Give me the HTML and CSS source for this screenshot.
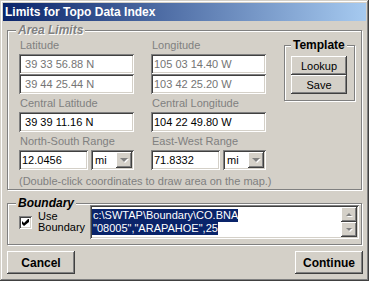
FILE: index.html
```html
<!DOCTYPE html>
<html lang="en">
<head>
    <meta charset="UTF-8">
    <title>Limits for Topo Data Index</title>
    <link rel="stylesheet" href="styles.css">
</head>
<body>
    <div class="window">
        <div class="titlebar">Limits for Topo Data Index</div>
        <div class="client">
            <fieldset class="group area">
                <legend class="legend-off">Area Limits</legend>
                <div class="area-body">
                    <div class="coords">
                        <div class="field">
                            <label>Latitude</label>
                            <input class="edit dim" type="text" value=" 39 33 56.88 N">
                            <input class="edit dim" type="text" value=" 39 44 25.44 N">
                        </div>
                        <div class="field">
                            <label>Longitude</label>
                            <input class="edit dim" type="text" value="105 03 14.40 W">
                            <input class="edit dim" type="text" value="103 42 25.20 W">
                        </div>
                        <div class="field">
                            <label>Central Latitude</label>
                            <input class="edit" type="text" value=" 39 39 11.16 N">
                        </div>
                        <div class="field">
                            <label>Central Longitude</label>
                            <input class="edit" type="text" value="104 22 49.80 W">
                        </div>
                        <div class="field">
                            <label>North-South Range</label>
                            <div class="range">
                                <input class="edit" type="text" value="12.0456">
                                <div class="combo"><span class="combo-text">mi</span><span class="btn3d drop"><i class="arrow down big-arrow"></i></span></div>
                            </div>
                        </div>
                        <div class="field">
                            <label>East-West Range</label>
                            <div class="range">
                                <input class="edit" type="text" value="71.8332">
                                <div class="combo"><span class="combo-text">mi</span><span class="btn3d drop"><i class="arrow down big-arrow"></i></span></div>
                            </div>
                        </div>
                    </div>
                    <fieldset class="group template">
                        <legend>Template</legend>
                        <button class="btn3d small">Lookup</button>
                        <button class="btn3d small">Save</button>
                    </fieldset>
                </div>
                <p class="hint">(Double-click coordinates to draw area on the map.)</p>
            </fieldset>

            <fieldset class="group boundary">
                <legend class="legend-on">Boundary</legend>
                <div class="boundary-body">
                    <div class="use">
                        <span class="check">
                            <svg width="7" height="7" viewBox="0 0 7 7"><polygon points="0,2 2,4 6,0 7,0 7,3 2,7 0,5" fill="#000"/></svg>
                        </span>
                        <span class="use-label">Use<br>Boundary</span>
                    </div>
                    <div class="memo">
                        <div class="memo-text">
                            <span class="sel">c:\SWTAP\Boundary\CO.BNA</span><br>
                            <span class="sel">"08005","ARAPAHOE",25</span>
                        </div>
                        <div class="vscroll">
                            <span class="btn3d sb"><i class="arrow up"></i></span>
                            <span class="btn3d sb"><i class="arrow down"></i></span>
                        </div>
                    </div>
                </div>
            </fieldset>

            <div class="actions">
                <button class="btn3d big">Cancel</button>
                <button class="btn3d big">Continue</button>
            </div>
        </div>
    </div>
</body>
</html>
```

FILE: styles.css
```css
* {
    box-sizing: border-box;
}
body {
    margin: 0;
    background: #d4d0c8;
    font-family: 'Liberation Sans', Arial, sans-serif;
    font-size: 11px;
    color: #000;
}
.window {
    width: 369px;
    height: 281px;
    padding: 3px;
    background: #d4d0c8;
    box-shadow: inset -1px -1px #404040, inset 1px 1px #d4d0c8, inset -2px -2px #808080, inset 2px 2px #fff;
    display: flex;
    flex-direction: column;
}
.titlebar {
    height: 18px;
    line-height: 18px;
    padding-left: 2px;
    color: #fff;
    font-size: 12px;
    font-weight: bold;
    background: linear-gradient(to right, #0a246a, #a6caf0);
}
.client {
    flex: 1;
    display: flex;
    flex-direction: column;
}

/* group boxes */
.group {
    margin: 0 4px;
    padding: 0;
    min-width: 0;
    border: 1px solid #808080;
    box-shadow: 1px 1px 0 #fff, inset 1px 1px 0 #fff;
}
.group legend {
    padding: 0 2px;
    font-size: 12px;
    font-weight: bold;
    line-height: 13px;
    background: #d4d0c8;
}
.legend-off,
.legend-on {
    font-style: italic;
    margin-left: -3px;
}
.legend-off {
    color: #808080;
    text-shadow: 1px 1px 0 #fff;
}

.area {
    margin-top: 3px;
    padding: 2px 10px 1px 11px;
}
.area-body {
    display: flex;
    align-items: flex-start;
}
.coords {
    display: grid;
    grid-template-columns: 115px 115px;
    column-gap: 17px;
    row-gap: 3px;
    margin-right: 14px;
}
.field {
    display: flex;
    flex-direction: column;
}
.field label {
    line-height: 13px;
    margin-bottom: 2px;
    padding-left: 1px;
    color: #808080;
}
.edit {
    width: 100%;
    height: 20px;
    margin: 0;
    border: 0;
    padding: 0 3px;
    font-family: 'Liberation Sans', Arial, sans-serif;
    font-size: 11px;
    color: #000;
    background: #fff;
    outline: none;
    box-shadow: inset 1px 1px #808080, inset -1px -1px #fff, inset 2px 2px #404040, inset -2px -2px #d4d0c8;
}
.edit.dim {
    color: #747474;
}
.range {
    display: flex;
    gap: 3px;
}
.range .edit {
    width: 69px;
}
.combo {
    width: 44px;
    height: 20px;
    padding: 2px;
    display: flex;
    background: #fff;
    box-shadow: inset 1px 1px #808080, inset -1px -1px #fff, inset 2px 2px #404040, inset -2px -2px #d4d0c8;
}
.combo-text {
    flex: 1;
    padding-left: 2px;
    line-height: 16px;
}

/* raised 3d face */
.btn3d {
    border: 0;
    margin: 0;
    padding: 0;
    background: #d4d0c8;
    color: #000;
    font-family: 'Liberation Sans', Arial, sans-serif;
    box-shadow: inset -1px -1px #404040, inset 1px 1px #fff, inset -2px -2px #808080;
}
.drop,
.sb {
    width: 16px;
    display: flex;
    align-items: center;
    justify-content: center;
}
.arrow {
    width: 0;
    height: 0;
    border-left: 3px solid transparent;
    border-right: 3px solid transparent;
    filter: drop-shadow(1px 1px 0 #fff);
}
.arrow.down {
    border-top: 3px solid #808080;
}
.arrow.up {
    border-bottom: 3px solid #808080;
}
.arrow.big-arrow {
    border-left-width: 4px;
    border-right-width: 4px;
    border-top-width: 4px;
}

.template {
    width: 71px;
    flex: none;
    padding: 4px 6px 6px;
}
.template legend {
    margin-left: 0;
}
.small {
    display: block;
    width: 56px;
    height: 19px;
    font-size: 11px;
}

.hint {
    margin: 5px 0 0;
    line-height: 13px;
    color: #808080;
}

/* boundary */
.boundary {
    margin-top: 7px;
    padding: 0 2px 5px 11px;
}
.boundary-body {
    margin-top: -5px;
    display: flex;
    align-items: center;
}
.use {
    width: 71px;
    flex: none;
    display: flex;
    align-items: center;
    gap: 6px;
}
.check {
    width: 13px;
    height: 13px;
    padding: 3px;
    display: flex;
    background: #fff;
    box-shadow: inset 1px 1px #808080, inset -1px -1px #fff, inset 2px 2px #404040, inset -2px -2px #d4d0c8;
}
.use-label {
    line-height: 11px;
}
.memo {
    flex: 1;
    height: 34px;
    padding: 2px;
    display: flex;
    background: #fff;
    box-shadow: inset 1px 1px #808080, inset -1px -1px #fff, inset 2px 2px #404040, inset -2px -2px #d4d0c8;
}
.memo-text {
    flex: 1;
    padding-top: 2px;
    line-height: 13px;
    white-space: nowrap;
}
.sel {
    display: inline-block;
    padding-left: 1px;
    color: #fff;
    background: #0a246a;
}
.vscroll {
    display: flex;
    flex-direction: column;
}
.sb {
    height: 15px;
}

/* bottom buttons */
.actions {
    margin: 6px 3px 0 4px;
    display: flex;
    justify-content: space-between;
}
.big {
    width: 68px;
    height: 23px;
    font-size: 12px;
    font-weight: bold;
}
```
